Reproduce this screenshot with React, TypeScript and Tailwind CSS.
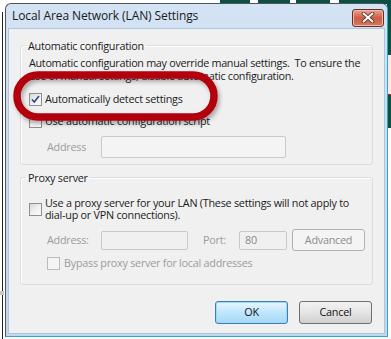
import React from 'react';

function CheckBox({ checked = false, disabled = false }: { checked?: boolean; disabled?: boolean }) {
  return (
    <span
      className={
        'relative flex h-[13px] w-[13px] shrink-0 items-center justify-center border ' +
        (disabled
          ? 'border-[#bcbcbc] bg-[#f4f4f4]'
          : 'border-[#8e8f8f] bg-gradient-to-br from-[#d6d6d6] via-[#f0f0f0] to-[#fbfbfb]')
      }
    >
      {checked && (
        <svg width="11" height="11" viewBox="0 0 11 11">
          <path d="M2 5.5 L4.3 8 L9 2" fill="none" stroke="#33478c" strokeWidth="1.7" />
        </svg>
      )}
    </span>
  );
}

function TextBox({ className = '', value = '', disabled = true }: { className?: string; value?: string; disabled?: boolean }) {
  return (
    <div
      className={
        'flex items-center rounded-[2px] border px-[5px] ' +
        (disabled ? 'border-[#c9c9c9] bg-[#f0f0f0] text-[#8a8a8a] ' : 'border-[#abadb3] bg-white ') +
        className
      }
    >
      {value}
    </div>
  );
}

function WinButton({ label, primary = false, disabled = false, className = '' }: { label: string; primary?: boolean; disabled?: boolean; className?: string }) {
  let look = 'border-[#707070] bg-gradient-to-b from-[#f2f2f2] via-[#e5e5e5] to-[#cfcfcf] text-[#111]';
  if (primary) look = 'border-[#3c7fb1] bg-gradient-to-b from-[#eaf6fd] via-[#bee6fd] to-[#a7d9f5] text-[#111] shadow-[inset_0_0_0_1px_#9fd7f7]';
  if (disabled) look = 'border-[#adb2b5] bg-[#f4f4f4] text-[#8c8c8c]';
  return (
    <div className={'flex items-center justify-center rounded-[3px] border ' + look + ' ' + className}>
      {label}
    </div>
  );
}

export default function App() {
  return (
    <div className="relative h-[339px] w-[391px] overflow-hidden bg-white font-['Segoe_UI','Open_Sans',sans-serif] text-[10.8px] tracking-[-0.25px] text-[#1b1b1b]">
      {/* desktop behind the dialog */}
      <div className="absolute left-[220px] top-0 h-[4px] w-[171px] bg-[#0d4f43]" />
      <div className="absolute left-[250px] top-0 h-[3px] w-[8px] bg-white" />
      <div className="absolute left-[290px] top-0 h-[3px] w-[6px] bg-white" />
      <div className="absolute left-[330px] top-0 h-[3px] w-[9px] bg-white" />
      <div className="absolute right-0 top-0 h-[128px] w-[4px] bg-[#0d4f43]" />
      <div className="absolute right-0 top-[55px] h-[40px] w-[3px] border-b border-[#c81414] bg-[#fbe9e4]" />
      <div className="absolute left-[2px] top-[12px] h-[327px] w-[1px] bg-[#222]" />
      <div className="absolute left-0 top-[291px] h-[4px] w-[4px] bg-[#c8c8c8]" />

      {/* dialog window */}
      <div className="absolute left-[5px] top-[3px] flex h-[334px] w-[383px] flex-col rounded-t-[6px] border border-[#4c5660] border-b-[#2aa6dc] border-r-[#2aa6dc] bg-gradient-to-b from-[#d3e3f3] to-[#c2d7ec]">
        <div className="flex h-[24px] shrink-0 items-center justify-between pl-[6px] pr-[3px]">
          <span className="text-[12px] tracking-[-0.1px] text-[#1a1a1a]">Local Area Network (LAN) Settings</span>
          <div className="mt-[3px] flex h-[18px] w-[32px] items-center justify-center rounded-[3px] border border-[#6b2b1f] bg-gradient-to-b from-[#e6a597] via-[#cc5b45] to-[#d27a63] shadow-[inset_0_0_0_1px_#f0b9ac]">
            <svg width="14" height="11" viewBox="0 0 14 11">
              <path d="M2.5 1.5 L11.5 9.5 M11.5 1.5 L2.5 9.5" stroke="#5a2b22" strokeWidth="3.6" strokeLinecap="round" />
              <path d="M2.5 1.5 L11.5 9.5 M11.5 1.5 L2.5 9.5" stroke="#ffffff" strokeWidth="2" strokeLinecap="round" />
            </svg>
          </div>
        </div>

        <div className="mx-[2px] mb-[2px] flex flex-1 flex-col border border-[#a9c6e3] bg-[#f0f0f0] px-[11px]">
          <fieldset className="mt-[10px] h-[126px] rounded-[3px] border border-[#d5dfe5] pl-[8px] pr-[4px] shadow-[inset_1px_1px_0_#fff]">
            <legend className="-ml-[3px] px-[2px] leading-[13px]">Automatic configuration</legend>
            <p className="mt-[4px] whitespace-nowrap leading-[13px] tracking-[-0.3px]">
              Automatic configuration may override manual settings.&nbsp; To ensure the
              <br />
              use of manual settings, disable automatic configuration.
            </p>
            <div className="mt-[11px] flex h-[13px] items-center gap-[3px]">
              <CheckBox checked />
              <span>Automatically detect settings</span>
            </div>
            <div className="mt-[9px] flex h-[13px] items-center gap-[3px]">
              <CheckBox />
              <span>Use automatic configuration script</span>
            </div>
            <div className="mt-[8px] flex items-center">
              <span className="w-[72px] pl-[18px] text-[#9c9c9c]">Address</span>
              <TextBox className="h-[22px] w-[185px] border-[#b5b5b5] bg-[#f4f4f4]" />
            </div>
          </fieldset>

          <fieldset className="mt-[6px] h-[114px] rounded-[3px] border border-[#d5dfe5] pl-[8px] pr-[4px] shadow-[inset_1px_1px_0_#fff]">
            <legend className="-ml-[3px] px-[2px] leading-[13px]">Proxy server</legend>
            <div className="mt-[13px] flex items-start gap-[3px]">
              <span className="pt-[6px]">
                <CheckBox />
              </span>
              <span className="whitespace-nowrap leading-[12px]">
                Use a proxy server for your LAN (These settings will not apply to
                <br />
                dial-up or VPN connections).
              </span>
            </div>
            <div className="mt-[8px] flex items-center">
              <span className="w-[72px] pl-[18px] text-[#9c9c9c]">Address:</span>
              <TextBox className="h-[19px] w-[87px]" />
              <span className="w-[51px] pl-[15px] text-[#9c9c9c]">Port:</span>
              <TextBox className="h-[19px] w-[48px]" value="80" />
              <WinButton label="Advanced" disabled className="ml-[5px] h-[22px] w-[73px]" />
            </div>
            <div className="mt-[6px] flex h-[13px] items-center gap-[4px] pl-[18px] text-[#9c9c9c]">
              <CheckBox disabled />
              <span>Bypass proxy server for local addresses</span>
            </div>
          </fieldset>

          <div className="mt-[16px] flex justify-end gap-[11px] pr-[1px]">
            <WinButton label="OK" primary className="h-[23px] w-[73px]" />
            <WinButton label="Cancel" className="h-[23px] w-[73px]" />
          </div>
        </div>
      </div>

      {/* red annotation ring */}
      <svg className="pointer-events-none absolute left-0 top-0" width="391" height="339">
        <defs>
          <filter id="ringShadow" x="-20%" y="-40%" width="140%" height="180%">
            <feDropShadow dx="2" dy="3" stdDeviation="2" floodColor="#000" floodOpacity="0.3" />
          </filter>
        </defs>
        <rect x="17" y="75" width="197" height="42" rx="21" fill="none" stroke="#b3000d" strokeWidth="7.5" filter="url(#ringShadow)" />
      </svg>
    </div>
  );
}
